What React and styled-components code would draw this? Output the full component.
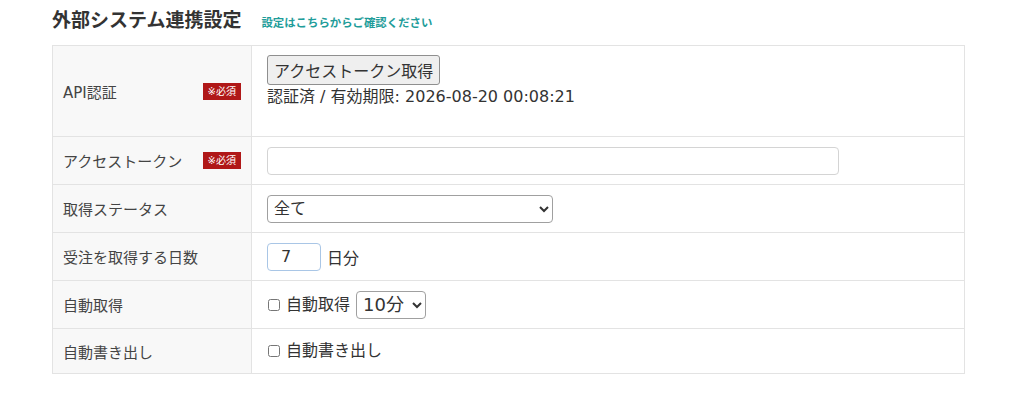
import styled, { createGlobalStyle } from 'styled-components';

const GlobalStyle = createGlobalStyle`
  body {
    margin: 0;
    background: #fff;
    font-family: "DejaVu Sans", "Noto Sans CJK JP", sans-serif;
    color: #333;
  }
`;

const Page = styled.div`
  padding: 6px 0 0 52px;
  width: 913px;
`;

const Header = styled.div`
  display: flex;
  align-items: baseline;
  gap: 20px;
  height: 39px;
`;

const Title = styled.h2`
  margin: 0;
  font-size: 19px;
  font-weight: bold;
  color: #333;
  line-height: 28px;
`;

const Hint = styled.a`
  font-size: 11.4px;
  font-weight: bold;
  color: #1f9d9a;
  text-decoration: none;
`;

const Table = styled.table`
  width: 100%;
  border-collapse: collapse;
  border: 1px solid #e3e3e3;
  font-size: 15px;
`;

const Row = styled.tr`
  border-top: 1px solid #e3e3e3;
`;

const Label = styled.th`
  width: 199px;
  background: #f8f8f8;
  border-right: 1px solid #e3e3e3;
  padding: 0 10px;
  font-weight: normal;
  text-align: left;
  color: #444;
  height: ${(p) => p.$h}px;
  box-sizing: border-box;
`;

const LabelInner = styled.div`
  display: flex;
  align-items: center;
  justify-content: space-between;
`;

const Required = styled.span`
  background: #b01818;
  color: #fff;
  font-size: 10px;
  padding: 0 5px;
  line-height: 17px;
`;

const Value = styled.td`
  padding: ${(p) => (p.$top ? '9px 15px 0' : '0 15px')};
  vertical-align: ${(p) => (p.$top ? 'top' : 'middle')};
  font-size: 16px;
  color: #333;
`;

const Inline = styled.div`
  display: flex;
  align-items: center;
  gap: 6px;
`;

const Button = styled.button`
  font-family: inherit;
  font-size: 16px;
  height: 30px;
  padding: 0 6px;
  background: #efefef;
  border: 1px solid #8f8f8f;
  border-radius: 3px;
  color: #333;
`;

const Status = styled.div`
  line-height: 24px;
`;

const TextInput = styled.input`
  box-sizing: border-box;
  height: 28px;
  width: ${(p) => p.$w}px;
  border: 1px solid ${(p) => p.$border || '#d4d4d4'};
  border-radius: 4px;
  font-family: inherit;
  font-size: 16px;
  color: #333;
  padding: 0 ${(p) => p.$pad || 8}px;
  outline: none;
`;

const Select = styled.select`
  box-sizing: border-box;
  height: 28px;
  width: ${(p) => p.$w}px;
  border: 1px solid #a0a0a0;
  border-radius: 4px;
  font-family: inherit;
  font-size: ${(p) => p.$fs || 16}px;
  color: #333;
  background: #fff;
  padding: 0 2px;
`;

const Check = styled.label`
  display: flex;
  align-items: center;
  gap: 6px;
  line-height: 24px;

  input {
    margin: 0 0 0 1px;
    width: 12px;
    height: 12px;
  }
`;

export default function App() {
  return (
    <>
      <GlobalStyle />
      <Page>
        <Header>
          <Title>外部システム連携設定</Title>
          <Hint href="#">設定はこちらからご確認ください</Hint>
        </Header>
        <Table>
          <tbody>
            <Row>
              <Label $h={91}>
                <LabelInner>
                  API認証<Required>※必須</Required>
                </LabelInner>
              </Label>
              <Value $top>
                <Button>アクセストークン取得</Button>
                <Status>認証済 / 有効期限: 2026-08-20 00:08:21</Status>
              </Value>
            </Row>
            <Row>
              <Label $h={48}>
                <LabelInner>
                  アクセストークン<Required>※必須</Required>
                </LabelInner>
              </Label>
              <Value>
                <TextInput $w={572} />
              </Value>
            </Row>
            <Row>
              <Label $h={48}>取得ステータス</Label>
              <Value>
                <Select $w={286}>
                  <option>全て</option>
                </Select>
              </Value>
            </Row>
            <Row>
              <Label $h={48}>受注を取得する日数</Label>
              <Value>
                <Inline>
                  <TextInput $w={54} $pad={13} $border="#a9c6e6" defaultValue="7" />
                  日分
                </Inline>
              </Value>
            </Row>
            <Row>
              <Label $h={48}>自動取得</Label>
              <Value>
                <Inline>
                  <Check>
                    <input type="checkbox" />
                    自動取得
                  </Check>
                  <Select $w={70} $fs={18}>
                    <option>10分</option>
                  </Select>
                </Inline>
              </Value>
            </Row>
            <Row>
              <Label $h={45}>自動書き出し</Label>
              <Value>
                <Check>
                  <input type="checkbox" />
                  自動書き出し
                </Check>
              </Value>
            </Row>
          </tbody>
        </Table>
      </Page>
    </>
  );
}
